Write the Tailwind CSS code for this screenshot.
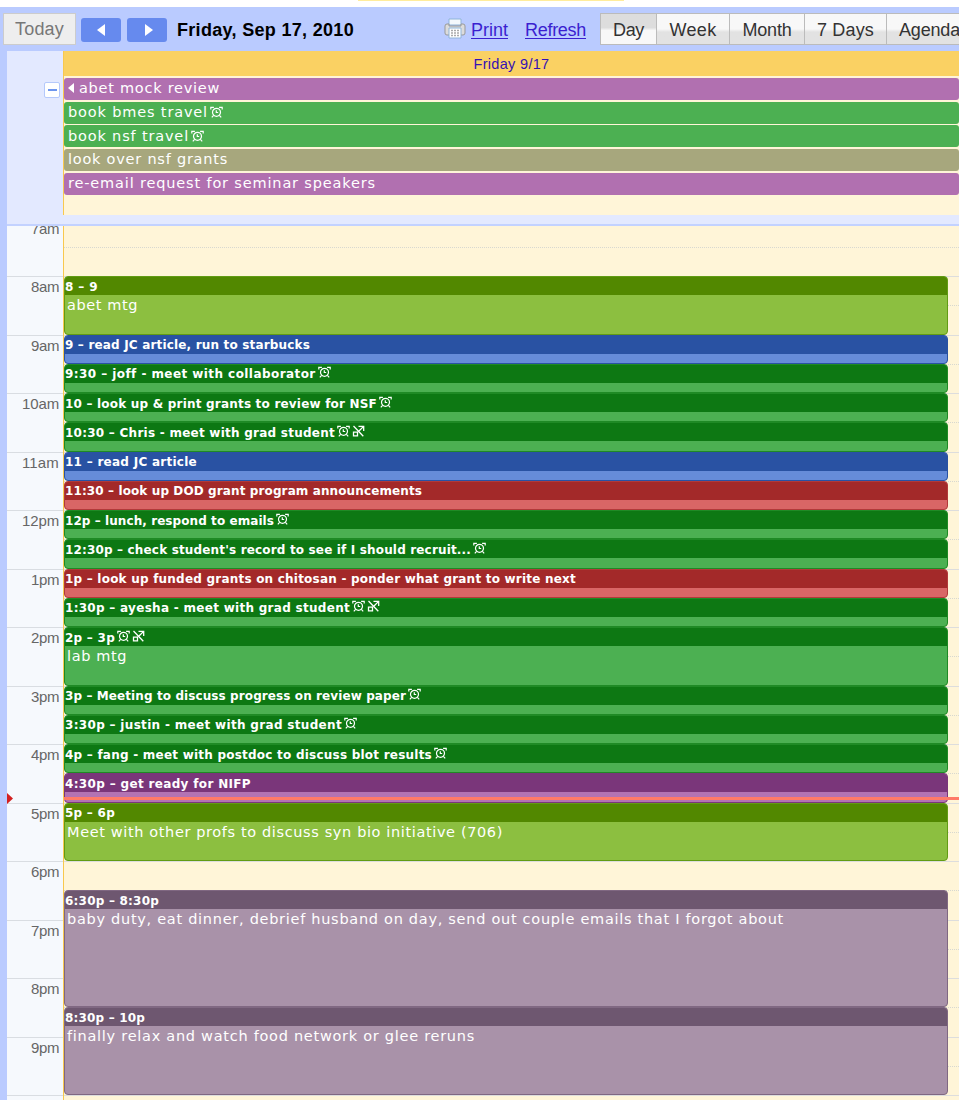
<!DOCTYPE html>
<html lang="en">
<head>
<meta charset="utf-8">
<title>Calendar - Friday, Sep 17, 2010</title>
<script src="https://cdn.jsdelivr.net/npm/@tailwindcss/browser@4"></script>
</head>
<body class="bg-white">
<svg class="hidden">
  <symbol id="alarm" viewBox="0 0 13 13"><g fill="none" stroke="currentColor" stroke-width="1.2"><circle cx="6.5" cy="6.3" r="4"/><path d="M6.3 4.2v2.3h1.9M.8 3.6V1.4h3.1M12.2 3.6V1.4H9.1M3.6 9.4 1.8 11.4M9.4 9.4l1.8 2"/></g></symbol>
  <symbol id="repeat" viewBox="0 0 13 13"><g fill="none" stroke="currentColor" stroke-width="1.3"><path d="M6.5 1.3h5.2V6M11.4 1.6 7 6M1.5 1l9.8 10.2M1.5 7.2h4v3.6h-4z"/></g></symbol>
</svg>
<div class="w-[959px] h-[1100px] overflow-hidden flex flex-col font-['Liberation_Sans',sans-serif]">
  <div class="h-[7px] shrink-0 pl-[358px]"><div class="w-[266px] h-px bg-[#ffec9c]"></div></div>

  <header class="h-[44px] shrink-0 bg-[#bacbff] flex items-start pt-[6px] text-[18px] whitespace-nowrap overflow-hidden">
    <button class="ml-[3px] w-[73px] h-[32px] shrink-0 border border-[#cccccc] bg-[#eeeeee] text-[#777777] flex items-center justify-center pt-px"><span data-w="49">Today</span></button>
    <button class="ml-[5px] mt-[5px] w-[40px] h-[24px] shrink-0 rounded-[3px] bg-[#668aee] flex items-center justify-center"><svg class="w-2 h-3 fill-white" viewBox="0 0 8 12"><path d="M8 0v12L0 6z"/></svg></button>
    <button class="ml-[6px] mt-[5px] w-[40px] h-[24px] shrink-0 rounded-[3px] bg-[#668aee] flex items-center justify-center"><svg class="w-2 h-3 fill-white ml-[3px]" viewBox="0 0 8 12"><path d="M0 0v12l8-6z"/></svg></button>
    <h1 class="ml-[10px] w-[267px] shrink-0 h-[32px] leading-[34px] font-bold text-black"><span data-w="177">Friday, Sep 17, 2010</span></h1>
    <svg class="w-[22px] h-[22px] mt-[5px] shrink-0" viewBox="0 0 22 22">
      <path d="M5 1h12v6H5z" fill="#f4f8fc" stroke="#8fb4d8"/>
      <path d="M1 8q0-2 2-2h2v2h12V6h2q2 0 2 2v7q0 2-2 2H3q-2 0-2-2z" fill="#dcdcdc" stroke="#999"/>
      <path d="M5 10h12v10H5z" fill="#fff" stroke="#8fb4d8"/>
      <path d="M7 12.5h8M7 15h8M7 17.5h8" stroke="#aaa" stroke-width="1.3" stroke-dasharray="2 1"/>
    </svg>
    <a class="ml-[5px] w-[54px] shrink-0 leading-[34px] text-[#3a1fd0] underline underline-offset-2"><span data-w="37">Print</span></a>
    <a class="w-[75px] shrink-0 leading-[34px] text-[#3a1fd0] underline underline-offset-2"><span data-w="61">Refresh</span></a>
    <div class="flex h-[32px] shrink-0 border border-[#bbbbbb] text-[#333333] leading-[32px]">
      <div class="w-[55px] text-center bg-linear-to-b from-[#dddddd] from-45% to-[#f8f8f8] to-55%"><span data-w="31">Day</span></div>
      <div class="w-[73px] text-center border-l border-[#bbbbbb] bg-linear-to-b from-[#f8f8f8] from-50% to-[#e2e2e2] to-60%"><span data-w="47">Week</span></div>
      <div class="w-[75px] text-center border-l border-[#bbbbbb] bg-linear-to-b from-[#f8f8f8] from-50% to-[#e2e2e2] to-60%"><span data-w="49">Month</span></div>
      <div class="w-[82px] text-center border-l border-[#bbbbbb] bg-linear-to-b from-[#f8f8f8] from-50% to-[#e2e2e2] to-60%"><span data-w="57">7 Days</span></div>
      <div class="w-[90px] pl-3 border-l border-[#bbbbbb] bg-linear-to-b from-[#f8f8f8] from-50% to-[#e2e2e2] to-60%"><span data-w="61">Agenda</span></div>
    </div>
  </header>

  <main class="grow min-h-0 border-l-[7px] border-[#bacbff] flex flex-col">
    <section class="h-[175px] shrink-0 bg-[#e3e9ff] border-b-[2px] border-[#c3d2ff] flex">
      <div class="w-[56px] shrink-0 flex justify-end pt-[31px] pr-[3px]">
        <div class="w-[16px] h-[16px] rounded-[2px] bg-white border border-[#b5c9fb] flex items-center justify-center"><div class="w-[9px] h-[2px] bg-[#6e96ee]"></div></div>
      </div>
      <div class="w-px h-[164px] bg-[#f8c84e]"></div>
      <div class="grow h-[164px] bg-[#fff5d8]">
        <div class="h-[25px] bg-[#fad163] text-center text-[14.5px] leading-[26px] text-[#3512b4]"><span data-w="76">Friday 9/17</span></div>
        <div id="allday" class="pt-[2px] flex flex-col gap-[1.7px] font-['DejaVu_Sans',sans-serif] text-[14.5px] text-white"></div>
      </div>
    </section>

    <section class="grow min-h-0 overflow-hidden bg-[#f6f9fd]">
      <div class="relative grid grid-cols-[56px_1px_1fr] -mt-[8.5px]">
        <div id="hours" class="col-start-1 row-start-1 text-right text-[15px] text-[#666666]"></div>
        <div class="col-start-2 row-start-1 bg-[#f8c84e]"></div>
        <div id="lines" class="col-start-3 row-start-1 bg-[#fff5d8]"></div>
        <div id="events" class="col-start-3 row-start-1 mr-[11px] pt-[58.5px] font-['DejaVu_Sans',sans-serif] text-white"></div>
        <div class="absolute left-[57px] right-0 top-[579px] h-[3px] bg-[#ff7a68]"></div>
        <svg class="absolute left-0 top-[575px] w-[6px] h-[11px]" viewBox="0 0 6 11"><path d="M0 0v11l6-5.5z" fill="#d32020"/></svg>
      </div>
    </section>
  </main>
</div>

<script>
const alarm = '<svg class="w-[13px] h-[13px] shrink-0"><use href="#alarm"/></svg>';
const repeat = '<svg class="w-[13px] h-[13px] shrink-0"><use href="#repeat"/></svg>';
const icons = s => (s.includes('a') ? alarm : '') + (s.includes('r') ? repeat : '');

const allday = [
  ['abet mock review', 141, 'bg-[#b170b0]', '<', ''],
  ['book bmes travel', 140, 'bg-[#4cb052]', '', 'a'],
  ['book nsf travel', 121, 'bg-[#4cb052]', '', 'a'],
  ['look over nsf grants', 160, 'bg-[#a7a77d]', '', ''],
  ['re-email request for seminar speakers', 308, 'bg-[#b170b0]', '', ''],
];
document.getElementById('allday').innerHTML = allday.map(([t, w, c, back, ic]) =>
  `<div class="h-[22px] rounded-[3px] pl-[4px] flex items-center gap-[2px] whitespace-nowrap ${c}">` +
  (back ? '<svg class="w-[6px] h-[10px] fill-white mr-[3px] -mt-[3px]" viewBox="0 0 6 10"><path d="M6 0v10L0 5z"/></svg>' : '') +
  `<span data-w="${w}">${t}</span>${icons(ic)}</div>`).join('');

const hours = ['7am','8am','9am','10am','11am','12pm','1pm','2pm','3pm','4pm','5pm','6pm','7pm','8pm','9pm',''];
document.getElementById('hours').innerHTML = hours.map(h =>
  `<div class="h-[58.5px] border-t border-[#d9dde2] pr-[4px] leading-[20px]">${h && `<span data-w="${h.length > 3 ? 37 : 28}">${h}</span>`}</div>`).join('');
document.getElementById('lines').innerHTML = hours.map(() =>
  '<div class="h-[58.5px] border-t border-[#dddddd]"><div class="h-[29.25px] border-b border-dotted border-[#d8d8d0]"></div></div>').join('');

const lime = ['bg-[#528800] border-[#528800]', 'bg-[#8cbf40] border-[#629c14]'];
const blue = ['bg-[#2952a3] border-[#2952a3]', 'bg-[#668cd9] border-[#2952a3]'];
const green = ['bg-[#0d7813] border-[#0d7813]', 'bg-[#4cb052] border-[#1f8a25]'];
const red = ['bg-[#a32929] border-[#a32929]', 'bg-[#d96666] border-[#b13a3a]'];
const purple = ['bg-[#7a367a] border-[#7a367a]', 'bg-[#b373b3] border-[#7a367a]'];
const mauve = ['bg-[#6e5770] border-[#6e5770]', 'bg-[#a992a9] border-[#806882]'];
// colour, half hours, title, title width, icons, description, description width
const events = [
  [lime, 2, '8 – 9', 33, '', 'abet mtg', 71],
  [blue, 1, '9 – read JC article, run to starbucks', 245, ''],
  [green, 1, '9:30 – joff - meet with collaborator', 250, 'a'],
  [green, 1, '10 – look up &amp; print grants to review for NSF', 312, 'a'],
  [green, 1, '10:30 – Chris - meet with grad student', 270, 'ar'],
  [blue, 1, '11 – read JC article', 132, ''],
  [red, 1, '11:30 – look up DOD grant program announcements', 357, ''],
  [green, 1, '12p – lunch, respond to emails', 209, 'a'],
  [green, 1, '12:30p – check student\'s record to see if I should recruit...', 406, 'a'],
  [red, 1, '1p – look up funded grants on chitosan - ponder what grant to write next', 511, ''],
  [green, 1, '1:30p – ayesha - meet with grad student', 285, 'ar'],
  [green, 2, '2p – 3p', 50, 'ar', 'lab mtg', 60],
  [green, 1, '3p – Meeting to discuss progress on review paper', 341, 'a'],
  [green, 1, '3:30p – justin - meet with grad student', 277, 'a'],
  [green, 1, '4p – fang - meet with postdoc to discuss blot results', 367, 'a'],
  [purple, 1, '4:30p – get ready for NIFP', 186, ''],
  [lime, 2, '5p – 6p', 50, '', 'Meet with other profs to discuss syn bio initiative (706)', 436],
  [null, 1],
  [mauve, 4, '6:30p – 8:30p', 94, '', 'baby duty, eat dinner, debrief husband on day, send out couple emails that I forgot about', 717],
  [mauve, 3, '8:30p – 10p', 80, '', 'finally relax and watch food network or glee reruns', 408],
];
const heights = { 1: 'h-[29.25px]', 2: 'h-[58.5px]', 3: 'h-[87.75px]', 4: 'h-[117px]' };
document.getElementById('events').innerHTML = events.map(([c, n, t, w, ic, d, dw]) => c ?
  `<div class="${heights[n]} rounded-[4px] border overflow-hidden whitespace-nowrap flex flex-col ${c[1]}">
    <div class="h-[19px] shrink-0 -mx-px -mt-px pl-px border-b flex items-center gap-[2px] text-[12px] font-bold ${c[0]}"><span class="mt-[3px]" data-w="${w}">${t}</span>${icons(ic)}</div>
    ${d ? `<div class="pl-[2px] text-[14.5px] leading-[21px]"><span data-w="${dw}">${d}</span></div>` : ''}
  </div>` : `<div class="${heights[n]}"></div>`).join('');

function fitLabels() {
  document.querySelectorAll('[data-w]').forEach(el => {
    el.style.letterSpacing = '0px';
    const w = +el.dataset.w, n = el.textContent.length;
    el.style.letterSpacing = (w - el.getBoundingClientRect().width) / n + 'px';
  });
}
window.addEventListener('load', fitLabels);
new ResizeObserver(fitLabels).observe(document.getElementById('events'));
</script>
</body>
</html>
